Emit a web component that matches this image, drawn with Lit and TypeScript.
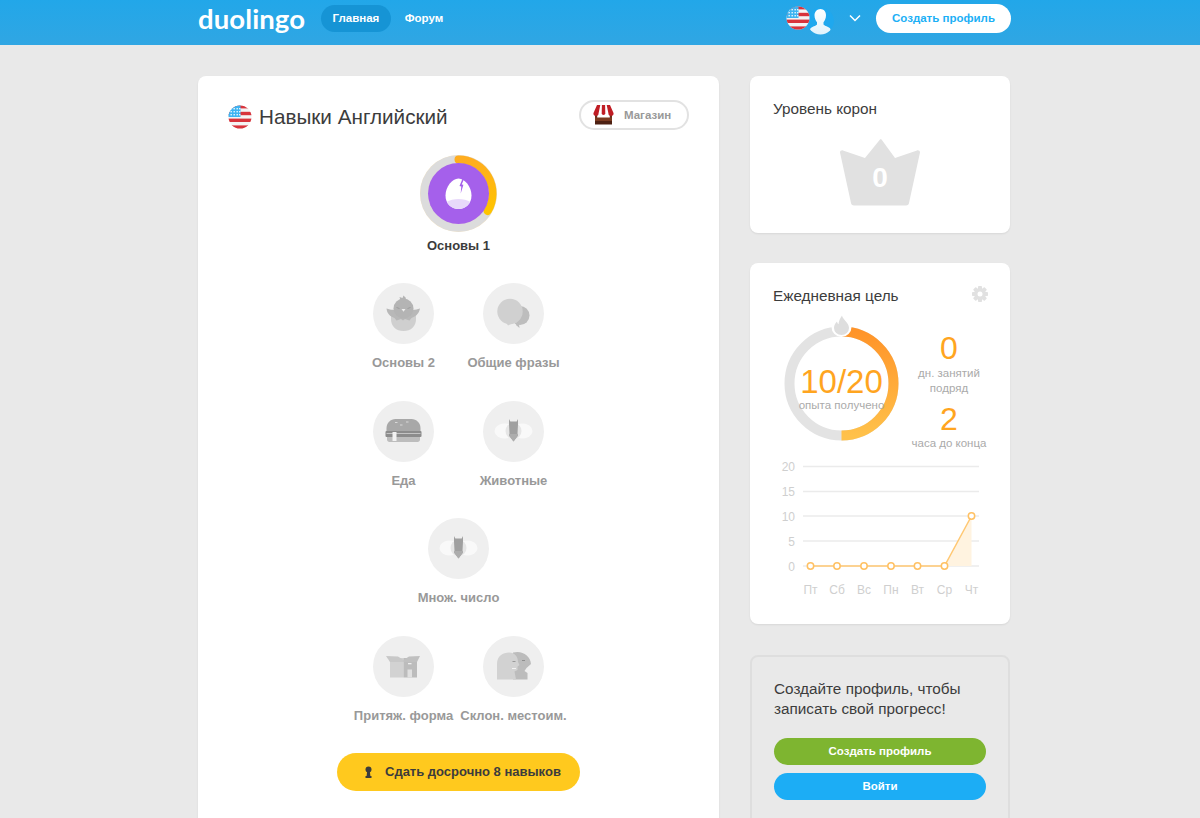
import { LitElement, html, css, svg } from "lit";
import { customElement } from "lit/decorators.js";

const flag = (id: string) => svg`
  <defs><clipPath id=${id}><circle cx="12" cy="12" r="11.5"/></clipPath></defs>
  <g clip-path=${`url(#${id})`}>
    <rect width="24" height="24" fill="#f4f4f4"/>
    <rect y="0" width="24" height="3.4" fill="#d8343c"/>
    <rect y="6.8" width="24" height="3.4" fill="#d8343c"/>
    <rect y="13.6" width="24" height="3.4" fill="#d8343c"/>
    <rect y="20.4" width="24" height="3.6" fill="#d8343c"/>
    <rect width="12.5" height="12" fill="#3eb4f2"/>
    <g fill="#e8f6fd">
      ${[3, 6, 9].map((y) => [2.5, 5.5, 8.5, 11].map((x) => svg`<rect x=${x} y=${y} width="1.4" height="1.4"/>`))}
    </g>
  </g>`;

const bee = svg`
  <ellipse cx="21.5" cy="30" rx="10" ry="7.5" fill="#f9f9f9"/>
  <ellipse cx="39.5" cy="30" rx="10" ry="7.5" fill="#f9f9f9"/>
  <circle cx="30.5" cy="30" r="8" fill="#e6e6e6"/>
  <path d="M26 18l1.300 2.500h6.400L35 18v5.500l-.5 9 .5 2-4.500 6-4.500-6 .5-2-.5-9z" fill="#a0a0a0"/>
  <path d="M26.500 33h8l.5 1.500-4.500 6-4.500-6z" fill="#adadad"/>`;

const icons: Record<string, unknown> = {
  chick: svg`
    <path d="M18 33h25v3c0 7.500-5 12-12.500 12S18 43.500 18 36z" fill="#cfcfcf"/>
    <path d="M13.500 25.500c4 1.500 7 1.500 9.500 1l14.500 0c2.500.5 5.500.5 9.500-1-1 5-4 8-8.500 9.500l-2 2.500-4.500-1.500-2 1.500-2-1.500-4.500 1.500-2-2.500c-4.500-1.500-7.500-4.500-8-9.500z" fill="#b8b8b8"/>
    <circle cx="30.500" cy="25.500" r="10" fill="#b4b4b4"/>
    <path d="M26.500 14l3 1 1-2.500 2.500 2.500-1 2.500h-4.500z" fill="#b4b4b4"/>
    <path d="M28.500 26h4l-2 2.800z" fill="#eee"/>
    <path d="M23.500 24.500l3 1M37.500 24.500l-3 1" stroke="#9c9c9c" stroke-width="1"/>`,
  chat: svg`
    <circle cx="37" cy="32.500" r="9.500" fill="#bdbdbd"/>
    <path d="M31 38l5 3 .500 4-3-2.500z" fill="#bdbdbd"/>
    <circle cx="27" cy="28.500" r="12.700" fill="#d0d0d0"/>
    <path d="M22 38l6 3-3 1.500z" fill="#d0d0d0"/>`,
  burger: svg`
    <path d="M13.500 30v-3c0-5 4-9 9-9h16c5 0 9 4 9 9v3z" fill="#a8a8a8"/>
    <path d="M22 21.500h2.500M33 21h2.500M27 24h2.500" stroke="#d8d8d8" stroke-width="1"/>
    <rect x="12.500" y="30" width="36" height="6" rx="1" fill="#8c8c8c"/>
    <rect x="13.500" y="32" width="34" height="1" fill="#c4c4c4"/>
    <path d="M14 36h33v2.500c0 1.500-1 2.500-2.500 2.500h-28c-1.500 0-2.500-1-2.500-2.500z" fill="#bdbdbd"/>
    <rect x="19.500" y="31" width="4" height="9" fill="#f2f2f2"/>`,
  bee,
  box: svg`
    <rect x="17" y="22" width="13.500" height="19.500" fill="#d2d2d2"/>
    <rect x="30.500" y="22" width="13.500" height="19.500" fill="#bcbcbc"/>
    <path d="M13 20l12 .5 5.500 3.500v2H17z" fill="#c8c8c8"/>
    <path d="M30.500 24l5.500-3.500 11-.5-3 6H30.500z" fill="#c0c0c0"/>
    <rect x="34.500" y="33.500" width="4.500" height="8" fill="#e0e0e0"/>
    <rect x="35" y="27" width="3.500" height="1.300" fill="#eee"/>`,
  heads: svg`
    <path d="M30 16.500c9-2.500 17.500 3 18 11.500l-4.500 4-2 3 3 2v6.500H30z" fill="#bcbcbc"/>
    <path d="M14 43.500V28c0-8 6-11.500 12-11.500S35 21 35 26l1.500 3-2 1.500V34l-3 1.500 1.500 8z" fill="#d2d2d2"/>
    <path d="M29.500 25.500h3" stroke="#999" stroke-width="1"/>
    <path d="M29 32.500h4" stroke="#f2f2f2" stroke-width="1"/>
    <path d="M39 24.500h3" stroke="#8e8e8e" stroke-width="1"/>`,
};

const rows = [
  [{ n: "Основы 2", i: "chick" }, { n: "Общие фразы", i: "chat" }],
  [{ n: "Еда", i: "burger" }, { n: "Животные", i: "bee" }],
  [{ n: "Множ. число", i: "bee" }],
  [{ n: "Притяж. форма", i: "box" }, { n: "Склон. местоим.", i: "heads" }],
];

const days = ["Пт", "Сб", "Вс", "Пн", "Вт", "Ср", "Чт"];
const xs = [37.5, 64, 91, 118, 144.5, 171.5, 198.5];
const gridY = [11.5, 36.5, 61, 86, 111];

@customElement("app-root")
export class AppRoot extends LitElement {
  static styles = css`
    :host {
      display: block;
      height: 818px;
      overflow: hidden;
      background: #e9e9e9;
      font-family: "Liberation Sans", Arial, sans-serif;
      color: #3c3c3c;
    }
    header {
      height: 45px;
      background: linear-gradient(#22a7e9, #30a6e3);
      display: flex;
      align-items: flex-start;
      padding-left: 198px;
      box-sizing: border-box;
    }
    .logo {
      width: 108px;
      height: 40px;
      font-family: "Lato", sans-serif;
      font-weight: 700;
      font-size: 27.5px;
      line-height: 38px;
      letter-spacing: 0.1px;
      color: #fff;
      margin-right: 15px;
      white-space: nowrap;
    }
    .nav {
      height: 27px;
      margin-top: 5px;
      border-radius: 14px;
      font-size: 11.5px;
      font-weight: 700;
      line-height: 27px;
      color: #fff;
      padding: 0 11.5px;
    }
    .nav.active { background: #1694d5; }
    .nav.forum { margin-left: 2px; padding-left: 12px; }
    .right-head {
      margin-left: auto;
      margin-right: 189px;
      display: flex;
      align-items: flex-start;
    }
    .flag-top { margin: 6px 0 0 0; position: relative; z-index: 1; }
    .avatar { margin: 6px 0 0 -3px; }
    .chev { margin: 14px 0 0 15px; }
    .cta {
      margin: 4px 0 0 15px;
      width: 135px;
      height: 29px;
      border-radius: 15px;
      background: #fff;
      color: #1cb0f6;
      font-size: 11.5px;
      font-weight: 700;
      line-height: 29px;
      text-align: center;
    }
    main {
      display: flex;
      gap: 31px;
      padding: 31px 0 0 198px;
      align-items: flex-start;
    }
    .card {
      background: #fff;
      border-radius: 8px;
      box-shadow: 0 1px 2px rgba(0, 0, 0, 0.08);
    }
    .skills {
      width: 521px;
      box-sizing: border-box;
      padding: 24px 30px 40px;
      display: flex;
      flex-direction: column;
      align-items: center;
    }
    .title-row {
      align-self: stretch;
      display: flex;
      align-items: center;
      height: 30px;
    }
    .title-flag { margin-top: 4px; }
    .title-row h1 {
      margin: 4px 0 0 7px;
      font-size: 20.7px;
      font-weight: 400;
      color: #3c3c3c;
    }
    .shop {
      margin-left: auto;
      width: 110px;
      height: 30px;
      box-sizing: border-box;
      border: 2px solid #e2e2e2;
      border-radius: 15px;
      display: flex;
      align-items: center;
      padding-left: 11.5px;
      gap: 10.5px;
      font-size: 11.5px;
      font-weight: 700;
      color: #999;
    }
    .ring-big { display: block; margin-top: 25px; }
    .big-label {
      margin-top: 4.5px;
      height: 17px;
      line-height: 17px;
      font-size: 13px;
      font-weight: 700;
      color: #3c3c3c;
    }
    .tree { display: flex; flex-direction: column; gap: 29.5px; margin-top: 29.5px; }
    .row { display: flex; justify-content: center; }
    .skill {
      width: 110px;
      display: flex;
      flex-direction: column;
      align-items: center;
    }
    .circle { width: 61px; height: 61px; display: block; }
    .label {
      margin-top: 10px;
      height: 17px;
      line-height: 17px;
      font-size: 13px;
      font-weight: 700;
      color: #999;
      white-space: nowrap;
    }
    .test {
      margin-top: 29px;
      width: 243px;
      height: 38px;
      border-radius: 19px;
      background: #ffc91e;
      display: flex;
      align-items: center;
      box-sizing: border-box;
      padding-left: 27px;
      gap: 12px;
      font-size: 13px;
      font-weight: 700;
      color: #3c3c3c;
    }
    aside {
      width: 260px;
      display: flex;
      flex-direction: column;
    }
    aside h2 {
      margin: 0;
      font-size: 15.3px;
      font-weight: 400;
      line-height: 20px;
      color: #3c3c3c;
    }
    .crowns { padding: 23px 23px 27px; height: 157px; box-sizing: border-box; }
    .crown { display: block; margin: 19px auto 0; }
    .goal { margin-top: 30px; padding: 23px 23px 24px; height: 361px; box-sizing: border-box; }
    .goal-title { display: flex; align-items: flex-start; justify-content: space-between; }
    .gear { margin: 0 -1px 0 0; }
    .goal-row { display: flex; margin: 20px 0 0 11px; }
    .ring-wrap { width: 115px; height: 115px; position: relative; flex: none; }
    .ring-svg { overflow: visible; display: block; }
    .ring-text {
      position: absolute;
      inset: 0;
      padding-top: 40px;
      box-sizing: border-box;
      text-align: center;
    }
    .ring-num { font-size: 33px; line-height: 32px; color: #ffa51f; }
    .ring-sub { font-size: 11.5px; line-height: 15px; color: #aaa; white-space: nowrap; }
    .stats {
      width: 80px;
      margin: 6px 0 0 10px;
      flex: none;
      text-align: center;
      font-size: 11.5px;
      line-height: 15px;
      color: #aaa;
      white-space: nowrap;
    }
    .stat-num { font-size: 32px; line-height: 32px; color: #ffa51f; }
    .stat-a { margin-top: 1.5px; }
    .stat-b { margin-top: 7.5px; }
    .stat-c { margin-top: 0.5px; }
    .chart { display: block; margin-top: 4.5px; }
    .chart text { font-family: "Liberation Sans", Arial, sans-serif; font-size: 12px; fill: #cfcfcf; }
    .signup {
      margin-top: 31px;
      background: #e9e9e9;
      border: 2px solid #dedede;
      border-radius: 8px;
      padding: 22px;
      display: flex;
      flex-direction: column;
      height: 200px;
      box-sizing: border-box;
    }
    .signup p { margin: 0 0 19px; font-size: 15.3px; line-height: 20px; color: #3c3c3c; }
    .btn {
      height: 27px;
      border-radius: 14px;
      text-align: center;
      color: #fff;
      font-size: 11.5px;
      font-weight: 700;
      line-height: 27px;
    }
    .btn.green { background: #7eb530; }
    .btn.blue { background: #1cadf5; margin-top: 7.5px; }
  `;

  private skillCircle(icon: string) {
    return html`<svg class="circle" viewBox="0 0 61 61">
      <circle cx="30.500" cy="30.500" r="30.500" fill="#efefef"/>
      ${icons[icon]}
    </svg>`;
  }

  render() {
    return html`
      <header>
        <div class="logo">duolingo</div>
        <div class="nav active">Главная</div>
        <div class="nav forum">Форум</div>
        <div class="right-head">
          <svg class="flag-top" width="24" height="24" viewBox="0 0 24 24">${flag("f1")}</svg>
          <svg class="avatar" width="27" height="30" viewBox="0 0 27 30">
            <defs>
              <clipPath id="av"><circle cx="13.500" cy="15" r="13.500"/></clipPath>
              <linearGradient id="avg" x1="0" y1="0" x2="0" y2="1"><stop offset="0" stop-color="#fff"/><stop offset="1" stop-color="#dff2fc"/></linearGradient>
            </defs>
            <g clip-path="url(#av)">
              <circle cx="13.500" cy="15" r="13.500" fill="#1fa8ee"/>
              <path d="M13.500 3c3.300 0 5.500 2.800 5.500 6.300 0 3-1.200 5.500-2.500 7v2c0 1 3.800 2.200 5.800 3.400 1 .6 1.500 2 1.500 3.300V30H2.700v-5c0-1.300.5-2.700 1.500-3.300 2-1.200 5.800-2.400 5.800-3.400v-2c-1.300-1.500-2.500-4-2.500-7C7.500 5.800 10.200 3 13.500 3z" fill="url(#avg)"/>
            </g>
          </svg>
          <svg class="chev" width="12" height="8" viewBox="0 0 12 8"><path d="M1 1.500l5 5 5-5" fill="none" stroke="#fff" stroke-width="1.500"/></svg>
          <div class="cta">Создать профиль</div>
        </div>
      </header>
      <main>
        <section class="card skills">
          <div class="title-row">
            <svg class="title-flag" width="24" height="24" viewBox="0 0 24 24">${flag("f2")}</svg>
            <h1>Навыки Английский</h1>
            <div class="shop">
              <svg width="21" height="20" viewBox="0 0 21 20">
                <path d="M2 7h2.200v7H2zM16.800 7H19v7h-2.200z" fill="#6b2f1c"/>
                <rect x="2" y="12.500" width="17" height="3.500" fill="#7a3a20"/>
                <rect x="2" y="16" width="17" height="3.500" fill="#4d2012"/>
                <path d="M4 0h3.300L5.600 8.200a2.600 2.600 0 0 1-5.200 0z" fill="#c01d24"/>
                <path d="M8.900 0h3.200l.2 8.200a1.800 1.800 0 0 1-3.600 0z" fill="#c01d24"/>
                <path d="M13.700 0H17l3.600 8.200a2.600 2.600 0 0 1-5.200 0z" fill="#c01d24"/>
              </svg>
              Магазин
            </div>
          </div>
          <svg class="ring-big" width="77" height="77" viewBox="0 0 77 77">
            <defs>
              <linearGradient id="rg" x1="0" y1="0" x2="0" y2="1"><stop offset="0" stop-color="#ffad1f"/><stop offset="1" stop-color="#ffc400"/></linearGradient>
              <clipPath id="eggc"><path d="M38.500 23.500c6.500 0 13 8.500 13 17 0 8-5.500 13.500-13 13.500s-13-5.500-13-13.500c0-8.500 6.500-17 13-17z"/></clipPath>
            </defs>
            <circle cx="38.500" cy="38.500" r="38.500" fill="#f6e5c4"/>
            <circle cx="38.500" cy="38.500" r="34.300" fill="none" stroke="#dcdcdc" stroke-width="8"/>
            <path d="M38.500 4.500A34 34 0 0 1 67.700 56" fill="none" stroke="url(#rg)" stroke-width="8" stroke-linecap="round"/>
            <circle cx="38.500" cy="38.500" r="30.500" fill="#a560eb"/>
            <path d="M38.500 23.500c6.500 0 13 8.500 13 17 0 8-5.500 13.500-13 13.500s-13-5.500-13-13.500c0-8.500 6.500-17 13-17z" fill="#fff"/>
            <g clip-path="url(#eggc)"><ellipse cx="38.500" cy="54" rx="17" ry="10" fill="#e8d9fa"/></g>
            <path d="M44.500 23l-2.800 6.500 1.700.3-2.700 8.700.6-7-1.800-.4 3.300-8.100z" fill="#a560eb"/>
          </svg>
          <div class="big-label">Основы 1</div>
          <div class="tree">
            ${rows.map(
              (r) => html`<div class="row">
                ${r.map((s) => html`<div class="skill">${this.skillCircle(s.i)}<div class="label">${s.n}</div></div>`)}
              </div>`
            )}
          </div>
          <div class="test">
            <svg width="9" height="12" viewBox="0 0 9 12">
              <circle cx="4.500" cy="3.500" r="3" fill="#3c3c3c"/>
              <path d="M3.200 5h2.600l.6 5H7.500v2h-6v-2h1.100z" fill="#3c3c3c"/>
            </svg>
            Сдать досрочно 8 навыков
          </div>
        </section>
        <aside>
          <section class="card crowns">
            <h2>Уровень корон</h2>
            <svg class="crown" width="80" height="68" viewBox="0 0 80 68">
              <path d="M40 1.500L25 20 3 12.500c-1.500-.5-3 .5-3 2L11 65c.300 1.500 1 2.500 3 2.500h52c2 0 2.700-1 3-2.500l11-50.500c0-1.500-1.500-2.500-3-2L55 20 41.500 1.500c-.500-.7-1-.7-1.500 0z" fill="#e1e1e1"/>
              <text x="40" y="49" text-anchor="middle" font-family="Liberation Sans, Arial, sans-serif" font-weight="700" font-size="28" fill="#fff">0</text>
            </svg>
          </section>
          <section class="card goal">
            <div class="goal-title">
              <h2>Ежедневная цель</h2>
              <svg class="gear" width="16" height="16" viewBox="0 0 16 16">
                <g fill="#e1e1e1">
                  ${[0, 45, 90, 135].map((a) => svg`<rect x="6" y="0" width="4" height="16" rx="0.800" transform=${`rotate(${a} 8 8)`}/>`)}
                  <circle cx="8" cy="8" r="6"/>
                </g>
                <circle cx="8" cy="8" r="2.500" fill="#fff"/>
              </svg>
            </div>
            <div class="goal-row">
              <div class="ring-wrap">
                <svg class="ring-svg" width="115" height="115" viewBox="0 0 115 115">
                  <defs>
                    <linearGradient id="og" x1="0" y1="0" x2="0" y2="1"><stop offset="0" stop-color="#ff9429"/><stop offset="1" stop-color="#ffc14a"/></linearGradient>
                  </defs>
                  <circle cx="57.500" cy="57.500" r="52" fill="none" stroke="#e3e3e3" stroke-width="10"/>
                  <path d="M57.500 5.500A52 52 0 0 1 57.500 109.500" fill="none" stroke="url(#og)" stroke-width="10"/>
                  <circle cx="57.500" cy="1" r="10" fill="#fff"/>
                  <path d="M58 -10.500c.5 4 7 7 7 12.500a7.500 7 0 0 1-15 0c0-3 1.500-5 3-6.500.3 1.500.8 2.300 1.500 2.800.3-3 1.500-6 3.500-8.800z" fill="#dedede"/>
                </svg>
                <div class="ring-text">
                  <div class="ring-num">10/20</div>
                  <div class="ring-sub">опыта получено</div>
                </div>
              </div>
              <div class="stats">
                <div class="stat-num">0</div>
                <div class="stat-a">дн. занятий<br>подряд</div>
                <div class="stat-num stat-b">2</div>
                <div class="stat-c">часа до конца</div>
              </div>
            </div>
            <svg class="chart" width="214" height="145" viewBox="0 0 214 145">
              ${gridY.map(
                (y, i) => svg`
                <line x1="30" x2="206" y1=${y} y2=${y} stroke="#ebebeb" stroke-width="1.500"/>
                <text x="22" y=${y + 4.5} text-anchor="end">${20 - i * 5}</text>`
              )}
              <path d="M171.500 111L198.500 61V111Z" fill="#fff3e0"/>
              <path d="M37.500 111H171.500L198.500 61" fill="none" stroke="#ffc873" stroke-width="1.500"/>
              ${xs.map(
                (x, i) => svg`
                <circle cx=${x} cy=${i === 6 ? 61 : 111} r="3.200" fill="#fff" stroke="#ffc163" stroke-width="1.500"/>
                <text x=${x} y="138.500" text-anchor="middle">${days[i]}</text>`
              )}
            </svg>
          </section>
          <section class="signup">
            <p>Создайте профиль, чтобы<br>записать свой прогресс!</p>
            <div class="btn green">Создать профиль</div>
            <div class="btn blue">Войти</div>
          </section>
        </aside>
      </main>
    `;
  }
}
